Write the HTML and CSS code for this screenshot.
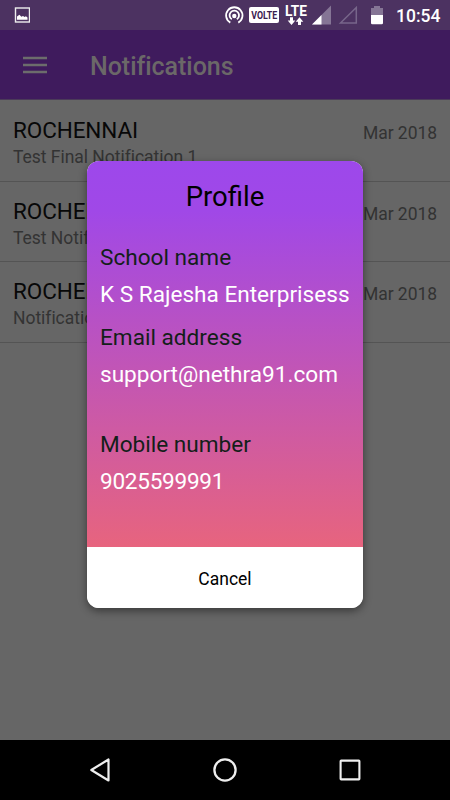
FILE: index.html
```html
<!DOCTYPE html>
<html lang="en">
<head>
<meta charset="utf-8">
<title>Notifications</title>
<link rel="stylesheet" href="styles.css">
</head>
<body>
<div class="phone">
  <div class="status">
    <svg class="picture" width="16" height="16" viewBox="0 0 16 16"><rect x="1.5" y="1" width="14" height="14" fill="none" stroke="#eee" stroke-width="1.4"/><path d="M3 12.8V9.6L5.4 7.8l2 2 1.6-.8 1.6 1 1.3-.8 1.6 1.2v2.4z" fill="#fff"/></svg>
    <svg width="216" height="30" viewBox="0 0 216 30" class="signals">
      <g fill="none" stroke="#fff" stroke-width="1.8"><path d="M6.3 22.6A8.2 8.2 0 1 1 14.3 22.6"/><path d="M7.8 19.3A4.7 4.7 0 1 1 12.8 19.3"/></g>
      <circle cx="10.3" cy="16" r="2.2" fill="#fff"/>
      <rect x="25" y="7" width="30" height="16" rx="2" fill="#fff"/>
      <text x="27.2" y="18.6" class="volte" textLength="26" lengthAdjust="spacingAndGlyphs">VOLTE</text>
      <text x="61" y="16" class="lte" textLength="22" lengthAdjust="spacingAndGlyphs">LTE</text>
      <path d="M66 17.2h3v3.3h2.3L67.5 25l-3.8-4.5H66zM74 25h3v-3.3h2.3l-3.8-4.5-3.8 4.5H74z" fill="#fff"/>
      <path d="M107 5.5V24.5H88z" fill="#857595"/><path d="M97.5 15v9.5H88z" fill="#fff"/>
      <path d="M132.3 7.5V23H116.5z" fill="none" stroke="#77668a" stroke-width="1.5"/>
      <path d="M147 8h3V6h6v2h3v8h-12z" fill="#857595"/><path d="M147 15h12v8q0 1.3-1.3 1.3h-9.4q-1.3 0-1.3-1.3z" fill="#fff"/>
    </svg>
    <span class="clock">10:54</span>
  </div>
  <header class="bar">
    <svg width="24" height="18" viewBox="0 0 24 18"><path d="M0 2h24M0 9h24M0 16h24" stroke="#6c6c6c" stroke-width="2.7"/></svg>
    <h1>Notifications</h1>
  </header>
  <main class="list">
    <div class="row"><div><div class="name">ROCHENNAI</div><div class="note">Test Final Notification 1</div></div><time>Mar 2018</time></div>
    <div class="row"><div><div class="name">ROCHENNAI</div><div class="note">Test Notification</div></div><time>Mar 2018</time></div>
    <div class="row"><div><div class="name">ROCHENNAI</div><div class="note">Notification</div></div><time>Mar 2018</time></div>
  </main>
  <nav class="nav">
    <svg width="24" height="26" viewBox="0 0 24 26"><path d="M20.5 2.5v21L3.3 13z" fill="none" stroke="#eee" stroke-width="2.2" stroke-linejoin="round"/></svg>
    <svg width="26" height="26" viewBox="0 0 26 26"><circle cx="13" cy="13" r="10.6" fill="none" stroke="#eee" stroke-width="2.3"/></svg>
    <svg width="24" height="26" viewBox="0 0 24 26"><rect x="2.6" y="3.6" width="18.8" height="18.8" rx=".6" fill="none" stroke="#eee" stroke-width="2.1"/></svg>
  </nav>
  <section class="dialog">
    <div class="body">
      <h2>Profile</h2>
      <dl>
        <dt>School name</dt><dd>K S Rajesha Enterprisess</dd>
        <dt>Email address</dt><dd>support@nethra91.com</dd>
        <dt class="mobile">Mobile number</dt><dd class="digits">9025599991</dd>
      </dl>
    </div>
    <button>Cancel</button>
  </section>
</div>
</body>
</html>
```
FILE: styles.css
```css
* { box-sizing: border-box; margin: 0; padding: 0; }
body { font-family: Roboto, sans-serif; overflow: hidden; }
svg { display: block; flex: none; }
.phone { position: relative; width: 450px; height: 800px; display: flex; flex-direction: column; background: #666; }
.status { height: 30px; background: #4c3261; display: flex; align-items: center; padding: 0 9px 0 14px; }
.signals { margin-left: auto; margin-right: -44px; }
.volte { font: 700 10px Roboto, sans-serif; fill: #3a2050; }
.lte { font: 700 14px Roboto, sans-serif; fill: #fff; }
.clock { font-size: 17.5px; font-weight: 500; color: #fff; line-height: 30px; width: 45px; white-space: nowrap; padding-top: 2px; }
.bar { height: 70px; background: #3f1b5d; display: flex; align-items: center; padding-left: 23px; border-bottom: 1px solid #4b3b59; }
.bar h1 { margin-left: 43px; font-size: 25px; font-weight: 500; color: #6b6868; line-height: 30px; padding-top: 5px; letter-spacing: -.04px; }
.list { flex: 1; padding-top: 1px; }
.row { height: 80.7px; display: flex; justify-content: space-between; padding: 16px 13px 0; border-bottom: 1px solid #545454; }
.name { font-size: 22.5px; line-height: 27px; color: #080808; letter-spacing: -.1px; }
.note { font-size: 17.5px; line-height: 22px; margin-top: 2px; color: #333; white-space: nowrap; letter-spacing: -.03px; }
.row time { font-size: 17.5px; line-height: 22px; padding-top: 5px; color: #333; letter-spacing: -.05px; }
.nav { height: 60px; background: #000; display: flex; align-items: center; justify-content: space-between; padding: 0 88px; }
.dialog { position: absolute; left: 87px; top: 161px; width: 276px; height: 447px; border-radius: 12px; overflow: hidden; display: flex; flex-direction: column; box-shadow: 0 3px 9px rgba(0,0,0,.45); background: #fff; }
.body { height: 386px; padding: 20px 13px 0; background: linear-gradient(#9d48eb, #a048e7 13%, #e7647e); }
.body h2 { font-size: 27.5px; line-height: 32px; font-weight: 400; text-align: center; color: #000; }
dl { margin-top: 26px; font-size: 22.6px; line-height: 37px; white-space: nowrap; }
dt { color: #141f1a; }
dd { color: #fff; margin-bottom: 6px; }
.digits { letter-spacing: -.28px; }
.mobile { margin-top: 33px; }
.dialog button { flex: 1; border: 0; padding-top: 2px; background: #fff; font: 17.5px Roboto, sans-serif; color: #000; }
```
